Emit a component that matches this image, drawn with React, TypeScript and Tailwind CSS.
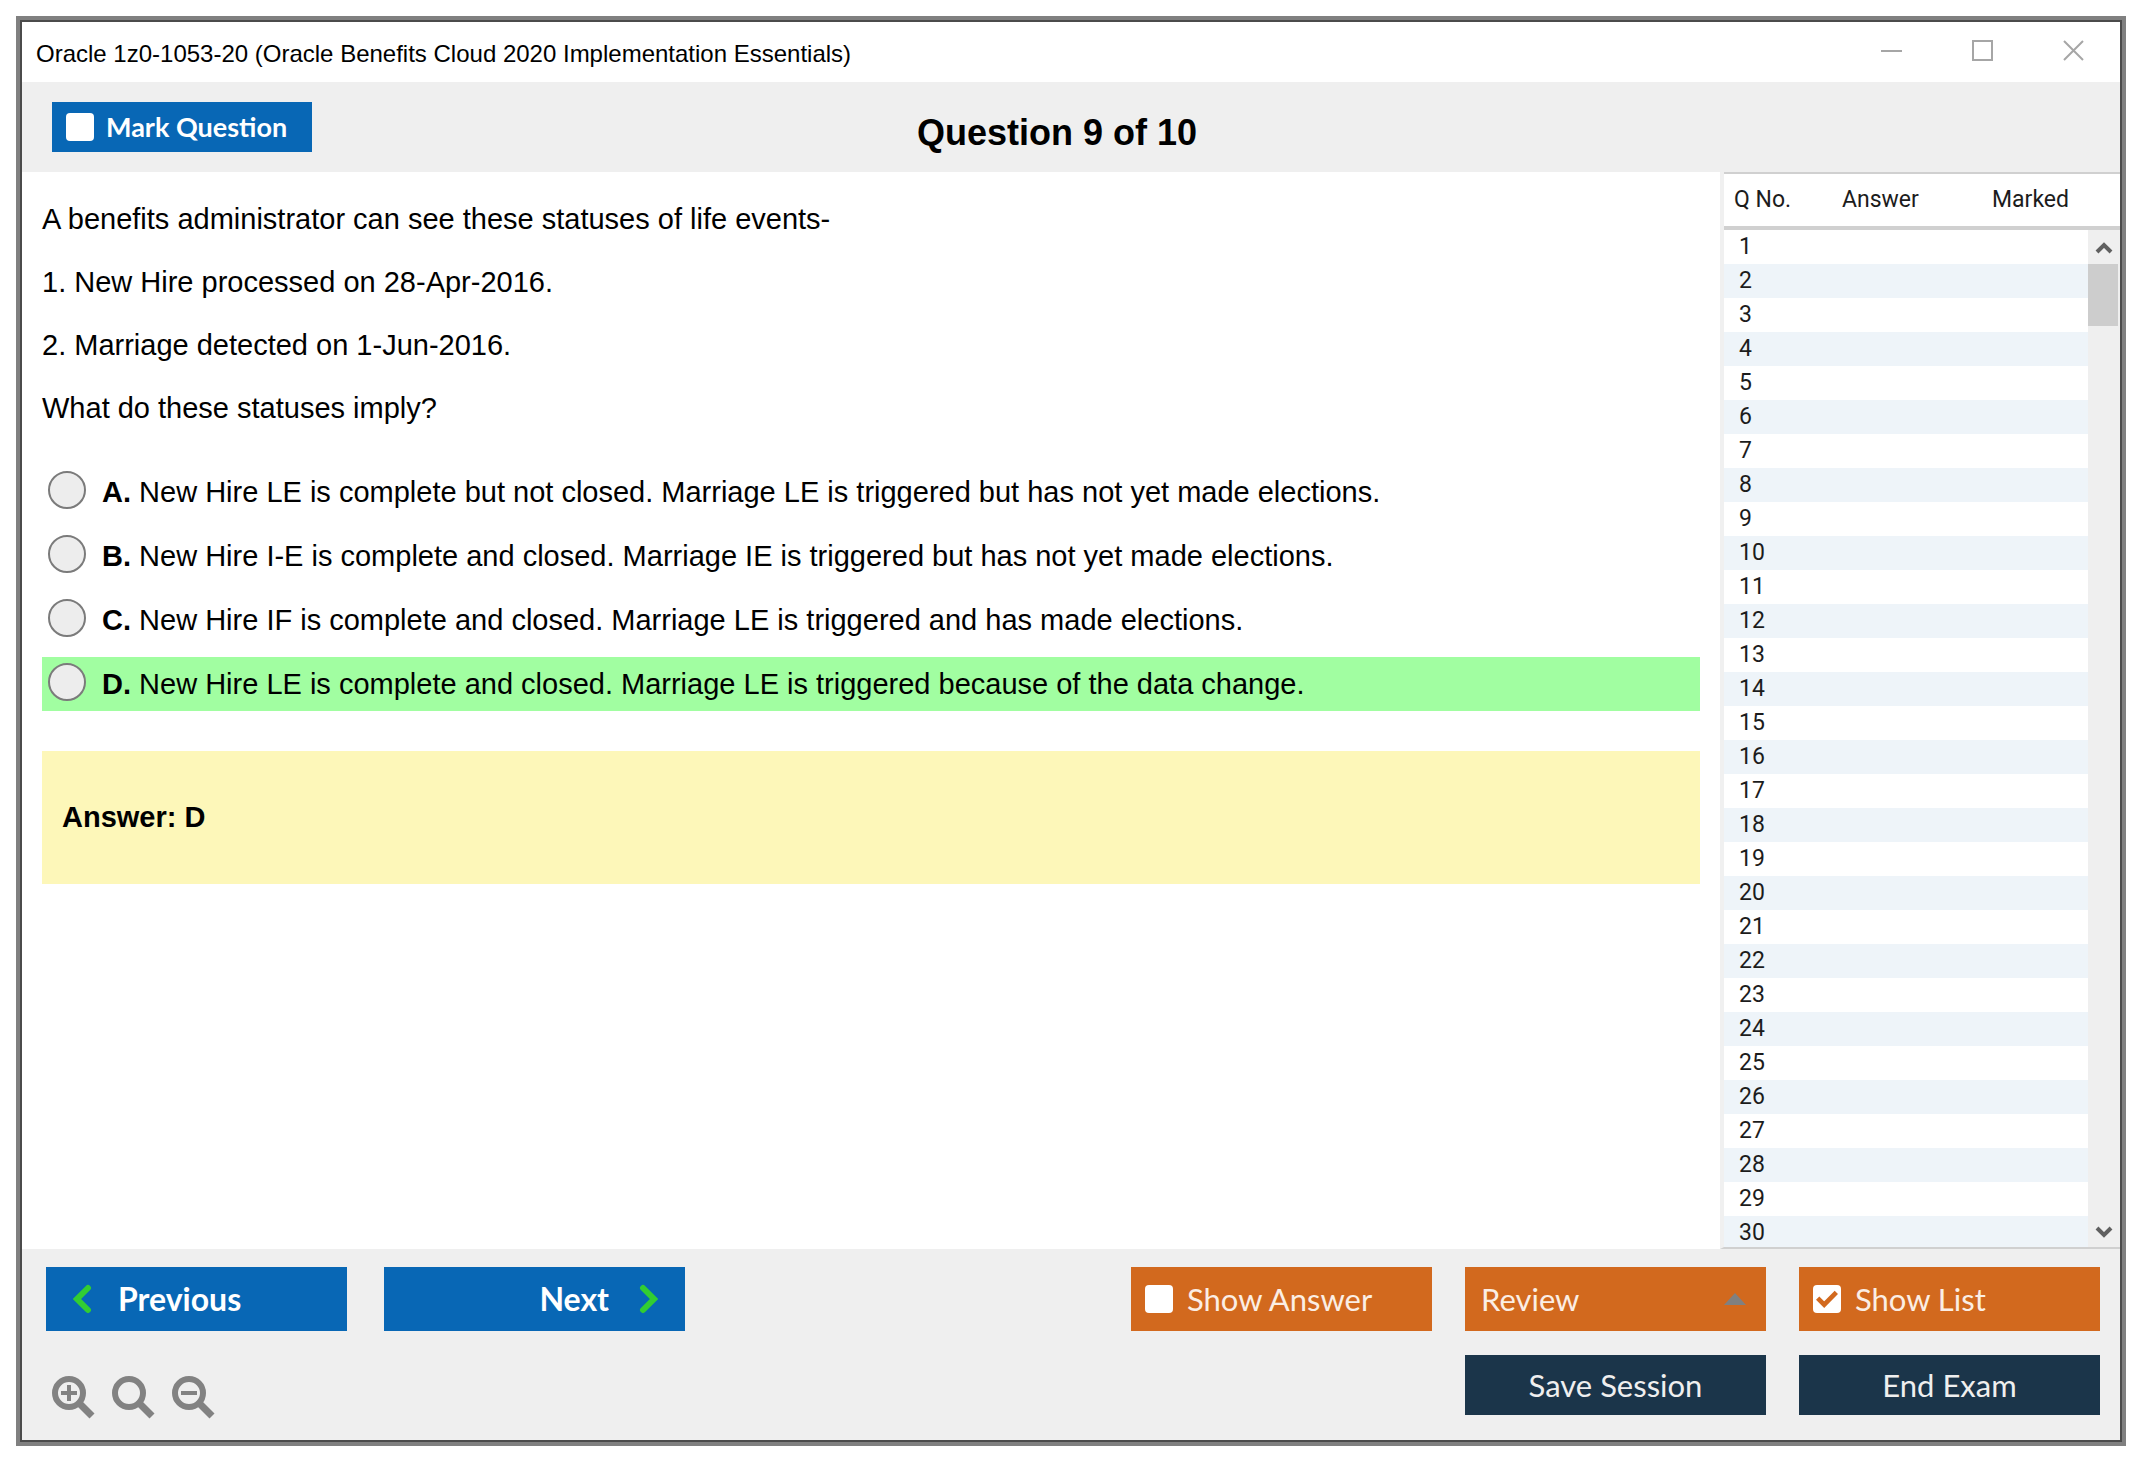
import { useState } from "react";

const choices = [
  { letter: "A", text: "New Hire LE is complete but not closed. Marriage LE is triggered but has not yet made elections." },
  { letter: "B", text: "New Hire I-E is complete and closed. Marriage IE is triggered but has not yet made elections." },
  { letter: "C", text: "New Hire IF is complete and closed. Marriage LE is triggered and has made elections." },
  { letter: "D", text: "New Hire LE is complete and closed. Marriage LE is triggered because of the data change." },
];

const correctAnswer = "D";

const questionNumbers = Array.from({ length: 30 }, (_, index) => index + 1);

export default function App() {
  const [marked, setMarked] = useState(false);
  const [showAnswer, setShowAnswer] = useState(false);
  const [showList, setShowList] = useState(true);
  const [selected, setSelected] = useState("");

  return (
    <div className="flex min-h-screen bg-white pt-4 pr-6 pb-6 pl-4 font-['Liberation_Sans',Arial,sans-serif] text-black">
      <div className="flex flex-1 border-4 border-[#808080]">
        <div className="flex flex-1 flex-col border-2 border-[#4b4b4b]">
          <TitleBar />

          <header className="grid h-[90px] grid-cols-[1fr_auto_1fr] items-center bg-[#efefef] px-[30px]">
            <label className="flex h-[50px] w-[260px] items-center gap-3 bg-[#0867b5] px-[14px] font-['Lato',sans-serif] text-[27px] font-bold text-white">
              <CheckBox checked={marked} onChange={setMarked} />
              Mark Question
            </label>
            <h1 className="pt-3 pr-7 text-4xl font-bold">Question 9 of 10</h1>
          </header>

          <div className="flex flex-1 bg-white">
            <main className="flex-1 px-5 pt-4 text-[29px] leading-[63px]">
              <p>A benefits administrator can see these statuses of life events-</p>
              <p>1. New Hire processed on 28-Apr-2016.</p>
              <p>2. Marriage detected on 1-Jun-2016.</p>
              <p>What do these statuses imply?</p>

              <div className="mt-[25px] grid gap-[10px]">
                {choices.map((choice) => (
                  <Choice
                    key={choice.letter}
                    letter={choice.letter}
                    text={choice.text}
                    correct={choice.letter === correctAnswer}
                    checked={selected === choice.letter}
                    onSelect={setSelected}
                  />
                ))}
              </div>

              <div className="mt-10 flex h-[133px] items-center bg-[#fdf7b9] px-5 font-bold">
                Answer: {correctAnswer}
              </div>
            </main>

            {showList && <QuestionList />}
          </div>

          <footer className="flex h-[191px] justify-between bg-[#efefef] pt-[18px] pr-5 pl-6 font-['Lato',sans-serif] text-[31px]">
            <div className="flex flex-col gap-[45px]">
              <div className="flex gap-[37px]">
                <button type="button" className="flex h-16 w-[301px] items-center gap-[26px] bg-[#0867b5] px-[26px] text-[32px] font-bold text-white">
                  <Chevron direction="left" />
                  Previous
                </button>
                <button type="button" className="flex h-16 w-[301px] items-center justify-end gap-[30px] bg-[#0867b5] px-[26px] text-[32px] font-bold text-white">
                  Next
                  <Chevron direction="right" />
                </button>
              </div>
              <div className="flex gap-4 pl-[6px]">
                <ZoomButton label="Zoom in" sign="M17 9v16M9 17h16" />
                <ZoomButton label="Reset zoom" sign="" />
                <ZoomButton label="Zoom out" sign="M9 17h16" />
              </div>
            </div>

            <div className="grid auto-rows-min grid-cols-[301px_301px_301px] gap-x-[33px] gap-y-6 text-[#fbeee4]">
              <label className="flex h-16 items-center gap-[14px] bg-[#d2691e] px-[14px]">
                <CheckBox checked={showAnswer} onChange={setShowAnswer} />
                Show Answer
              </label>
              <button type="button" className="flex h-16 items-center justify-between bg-[#d2691e] px-4">
                Review
                <svg viewBox="0 0 22 12" className="mr-1 h-3 w-[22px]" aria-hidden="true">
                  <path d="M11 0L22 12H0z" fill="#808080" />
                </svg>
              </button>
              <label className="flex h-16 items-center gap-[14px] bg-[#d2691e] px-[14px]">
                <CheckBox checked={showList} onChange={setShowList} />
                Show List
              </label>
              <button type="button" className="col-start-2 h-[60px] bg-[#1b354a] text-[#efefef]">Save Session</button>
              <button type="button" className="h-[60px] bg-[#1b354a] text-[#efefef]">End Exam</button>
            </div>
          </footer>
        </div>
      </div>
    </div>
  );
}

function TitleBar() {
  return (
    <div className="flex h-[60px] items-center justify-between bg-white pr-9 pl-[14px]">
      <div className="pt-1 text-2xl">Oracle 1z0-1053-20 (Oracle Benefits Cloud 2020 Implementation Essentials)</div>
      <div className="flex gap-[70px] pb-1">
        <WindowButton label="Minimize" path="M0 11h21" />
        <WindowButton label="Maximize" path="M1 1h19v19H1z" />
        <WindowButton label="Close" path="M1 1l19 19M20 1L1 20" />
      </div>
    </div>
  );
}

function WindowButton({ label, path }: { label: string; path: string }) {
  return (
    <button type="button" aria-label={label}>
      <svg viewBox="0 0 21 21" className="h-[21px] w-[21px]" fill="none" stroke="#a6a6a6" strokeWidth="2">
        <path d={path} />
      </svg>
    </button>
  );
}

function CheckBox({ checked, onChange }: { checked: boolean; onChange: (checked: boolean) => void }) {
  return (
    <span className="grid">
      <input
        type="checkbox"
        checked={checked}
        onChange={(event) => onChange(event.target.checked)}
        className="col-start-1 row-start-1 h-7 w-7 appearance-none rounded-sm bg-white"
      />
      {checked && (
        <svg viewBox="0 0 30 30" className="pointer-events-none col-start-1 row-start-1 h-7 w-7" fill="none" stroke="#d2691e" strokeWidth="5">
          <path d="M5 14l7 7L25 8" />
        </svg>
      )}
    </span>
  );
}

function Choice({ letter, text, correct, checked, onSelect }: { letter: string; text: string; correct: boolean; checked: boolean; onSelect: (letter: string) => void }) {
  return (
    <label className={`flex h-[54px] items-center px-[6px] leading-[54px] ${correct ? "bg-[#a1fea1]" : ""}`}>
      <input
        type="radio"
        name="choice"
        value={letter}
        checked={checked}
        onChange={() => onSelect(letter)}
        className="mr-4 mb-1 h-[38px] w-[38px] appearance-none rounded-full border-2 border-[#7b7b7b] bg-[#ededed] checked:bg-[#7b7b7b]"
      />
      <span>
        <b>{letter}.</b> {text}
      </span>
    </label>
  );
}

function QuestionList() {
  return (
    <aside className="h-0 min-h-full w-[400px] overflow-hidden border-b-2 border-l-4 border-b-[#d0d0d0] border-l-[#f0f0f0] font-['Roboto',sans-serif] text-[23px] text-[#1c1c1c]">
      <table className="w-full border-collapse text-left">
        <thead>
          <tr className="h-[55px] border-t-2 border-b-4 border-[#d0d0d0] leading-[34px]">
            <th className="w-[106px] pl-[10px] font-normal">Q No.</th>
            <th className="w-[150px] pl-3 font-normal">Answer</th>
            <th className="pl-3 font-normal" colSpan={2}>Marked</th>
          </tr>
        </thead>
        <tbody>
          {questionNumbers.map((number) => (
            <tr key={number} className="h-[34px] leading-[34px] even:bg-[#eef4f9]">
              <td className="pl-[15px]">{number}</td>
              <td />
              <td />
              {number === 1 && (
                <td rowSpan={questionNumbers.length} className="h-px w-8 bg-[#efefef] p-0">
                  <ScrollBar />
                </td>
              )}
            </tr>
          ))}
        </tbody>
      </table>
    </aside>
  );
}

function ScrollBar() {
  return (
    <div className="flex h-full flex-col items-center justify-between">
      <div className="w-full">
        <svg viewBox="0 0 32 34" className="h-[34px] w-8" fill="none" stroke="#606060" strokeWidth="4">
          <path d="M9 22l7-7 7 7" />
        </svg>
        <div className="mr-[2px] h-[62px] bg-[#cdcdcd]" />
      </div>
      <svg viewBox="0 0 32 34" className="h-[34px] w-8" fill="none" stroke="#606060" strokeWidth="4">
        <path d="M9 12l7 7 7-7" />
      </svg>
    </div>
  );
}

function Chevron({ direction }: { direction: "left" | "right" }) {
  return (
    <svg viewBox="0 0 20 30" className="h-[30px] w-5" fill="none" stroke="#32cd32" strokeWidth="6" strokeLinecap="round">
      <path d={direction === "left" ? "M16 4L5 15l11 11" : "M4 4l11 11L4 26"} />
    </svg>
  );
}

function ZoomButton({ label, sign }: { label: string; sign: string }) {
  return (
    <button type="button" aria-label={label}>
      <svg viewBox="0 0 44 44" className="h-11 w-11" fill="none" stroke="#828282">
        <circle cx="17" cy="17" r="14" strokeWidth="6" />
        <path d="M28 28l12 12" strokeWidth="7" />
        <path d={sign} strokeWidth="4" />
      </svg>
    </button>
  );
}
